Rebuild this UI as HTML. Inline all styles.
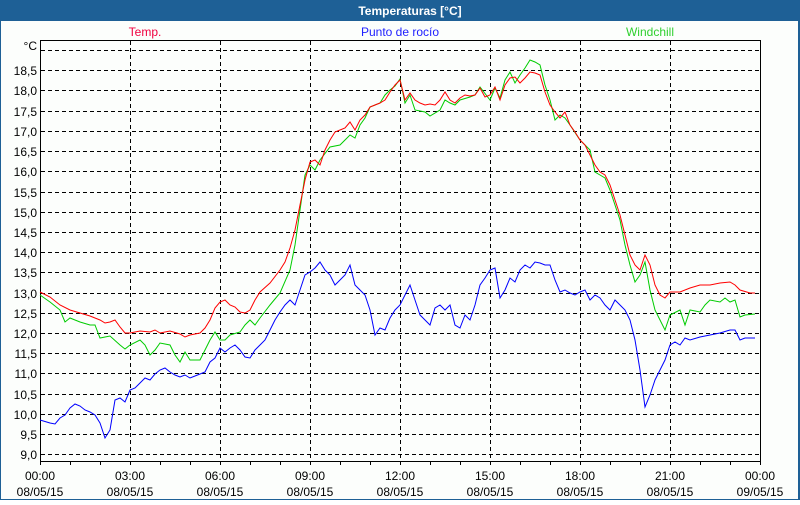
<!DOCTYPE html>
<html><head><meta charset="utf-8"><style>
html,body{margin:0;padding:0;}
body{width:800px;height:500px;overflow:hidden;background:#fff;font-family:"Liberation Sans","DejaVu Sans",sans-serif;}
</style></head><body>
<svg width="800" height="500" xmlns="http://www.w3.org/2000/svg" font-family="Liberation Sans, DejaVu Sans, sans-serif">
<rect x="0" y="0" width="800" height="500" fill="#fcfefc"/>
<rect x="0" y="0" width="800" height="21" fill="#1e6096"/>
<rect x="0" y="0" width="1" height="500" fill="#1e6096"/>
<rect x="798" y="0" width="2" height="500" fill="#1e6096"/>
<rect x="0" y="499" width="800" height="1" fill="#1e6096"/>
<text x="410" y="15" fill="#fff" font-size="12" font-weight="bold" text-anchor="middle">Temperaturas [°C]</text>
<text x="145" y="36" fill="#f00040" font-size="12" text-anchor="middle">Temp.</text>
<text x="400" y="36" fill="#2020ff" font-size="12" text-anchor="middle">Punto de rocío</text>
<text x="650" y="36" fill="#30d030" font-size="12" text-anchor="middle">Windchill</text>
<g stroke="#000" stroke-width="1" stroke-dasharray="4,3" fill="none">
<path d="M41 50.5H760M41 70.5H760M41 90.5H760M41 111.5H760M41 131.5H760M41 151.5H760M41 171.5H760M41 192.5H760M41 212.5H760M41 232.5H760M41 252.5H760M41 272.5H760M41 293.5H760M41 313.5H760M41 333.5H760M41 353.5H760M41 373.5H760M41 394.5H760M41 414.5H760M41 434.5H760M41 454.5H760"/>
<path d="M130.5 41V461M220.5 41V461M310.5 41V461M400.5 41V461M490.5 41V461M580.5 41V461M670.5 41V461"/>
</g>
<path d="M40.5 461V40.5H760.5V461.5H40" stroke="#000" fill="none"/>
<path d="M40.5 461v4M70.5 461v4M100.5 461v4M130.5 461v4M160.5 461v4M190.5 461v4M220.5 461v4M250.5 461v4M280.5 461v4M310.5 461v4M340.5 461v4M370.5 461v4M400.5 461v4M430.5 461v4M460.5 461v4M490.5 461v4M520.5 461v4M550.5 461v4M580.5 461v4M610.5 461v4M640.5 461v4M670.5 461v4M700.5 461v4M730.5 461v4M760.5 461v4" stroke="#000"/>
<g font-size="12" fill="#000" text-anchor="end">
<text x="37" y="50">°C</text>
<text x="37" y="75">18,5</text><text x="37" y="95">18,0</text><text x="37" y="116">17,5</text><text x="37" y="136">17,0</text><text x="37" y="156">16,5</text><text x="37" y="176">16,0</text><text x="37" y="197">15,5</text><text x="37" y="217">15,0</text><text x="37" y="237">14,5</text><text x="37" y="257">14,0</text><text x="37" y="277">13,5</text><text x="37" y="298">13,0</text><text x="37" y="318">12,5</text><text x="37" y="338">12,0</text><text x="37" y="358">11,5</text><text x="37" y="378">11,0</text><text x="37" y="399">10,5</text><text x="37" y="419">10,0</text><text x="37" y="439">9,5</text><text x="37" y="459">9,0</text>
</g>
<g font-size="12" fill="#000" text-anchor="middle">
<text x="40" y="480">00:00</text><text x="40" y="496">08/05/15</text>
<text x="130" y="480">03:00</text><text x="130" y="496">08/05/15</text>
<text x="220" y="480">06:00</text><text x="220" y="496">08/05/15</text>
<text x="310" y="480">09:00</text><text x="310" y="496">08/05/15</text>
<text x="400" y="480">12:00</text><text x="400" y="496">08/05/15</text>
<text x="490" y="480">15:00</text><text x="490" y="496">08/05/15</text>
<text x="580" y="480">18:00</text><text x="580" y="496">08/05/15</text>
<text x="670" y="480">21:00</text><text x="670" y="496">08/05/15</text>
<text x="760" y="480">00:00</text><text x="760" y="496">09/05/15</text>
</g>
<polyline fill="none" stroke="#0000ff" stroke-width="1" points="40,420 50,423 55,424 60,418 65,415 70,408 75,404 80,406 85,410 90,412 95,415 100,423 105,438 110,430 115,400 120,398 125,402 130,390 135,388 140,383 145,378 150,380 155,374 160,370 165,368 170,372 175,375 180,377 185,375 190,378 195,376 200,374 205,372 210,362 215,358 220,348 225,352 230,348 235,345 240,350 245,357 250,358 255,350 260,345 265,340 270,330 275,320 280,312 285,305 290,300 295,305 300,290 305,275 310,272 315,268 320,262 325,270 330,275 335,285 340,280 345,275 350,265 355,285 360,290 365,295 370,310 375,335 380,328 385,330 390,318 395,310 400,305 405,295 410,285 415,300 420,315 425,320 430,325 435,308 440,305 445,310 450,305 455,325 460,328 465,315 470,320 475,305 480,285 485,278 490,270 495,268 500,298 505,290 510,278 515,282 520,270 525,265 530,268 535,262 540,263 545,265 550,265 555,280 560,292 565,290 570,293 575,295 580,292 585,290 590,300 595,295 600,298 605,305 610,310 615,300 620,305 625,310 630,320 635,340 640,370 645,407 650,395 655,380 660,370 665,360 670,345 675,342 680,345 685,338 690,340 700,337 710,335 720,333 730,330 735,330 740,340 745,338 755,338"/>
<polyline fill="none" stroke="#00cc00" stroke-width="1" points="40,295 50,302 60,310 65,322 70,318 80,322 90,325 95,325 100,338 110,336 120,345 125,349 130,345 140,340 145,345 150,355 155,350 160,343 170,345 175,355 180,362 185,352 190,360 200,360 205,350 210,340 215,332 220,340 225,340 230,335 240,332 245,325 250,320 255,325 260,318 270,305 280,293 290,270 295,245 300,210 305,175 310,165 315,170 320,160 330,147 340,145 350,135 355,138 360,125 365,118 370,107 380,103 385,95 390,90 395,86 400,79 405,103 410,95 415,110 425,112 430,116 440,110 445,100 450,103 455,105 460,100 470,97 475,95 480,87 490,100 495,88 500,98 505,80 510,72 515,83 520,75 525,68 530,60 535,62 540,65 545,85 550,100 555,120 560,115 565,118 570,125 580,140 590,150 595,172 600,175 605,178 610,190 620,220 625,245 630,265 635,282 640,275 645,262 650,290 655,310 660,320 665,330 670,315 680,310 685,325 690,310 700,312 705,305 710,300 720,302 725,298 730,302 735,300 740,317 745,315 755,314"/>
<polyline fill="none" stroke="#ff0000" stroke-width="1" points="40,292 50,297 60,305 70,310 80,313 90,316 100,320 105,323 110,322 115,320 120,327 125,333 130,333 140,331 150,332 155,330 160,333 170,331 180,334 185,337 190,335 200,333 205,328 210,320 215,308 220,302 225,300 230,305 235,307 240,312 245,313 250,310 255,300 260,292 270,283 280,270 285,262 290,248 295,230 300,205 305,180 310,162 315,160 320,165 325,150 330,140 335,132 340,130 345,128 350,122 355,130 360,120 365,115 370,107 375,105 380,103 385,100 390,92 395,85 400,80 405,100 410,93 415,100 420,103 425,105 430,104 435,105 440,100 445,92 450,100 455,103 460,98 465,95 470,96 475,95 480,88 485,97 490,95 495,87 500,100 505,85 510,78 515,77 520,83 525,78 530,72 535,73 540,75 545,92 550,105 555,112 560,118 565,112 570,125 575,132 580,140 585,145 590,155 595,165 600,172 605,175 610,185 615,200 620,215 625,235 630,255 635,265 640,270 645,255 650,265 655,285 660,295 665,298 670,292 680,292 690,288 700,285 710,285 720,283 730,282 735,285 740,290 750,293 755,293"/>
</svg>
</body></html>
